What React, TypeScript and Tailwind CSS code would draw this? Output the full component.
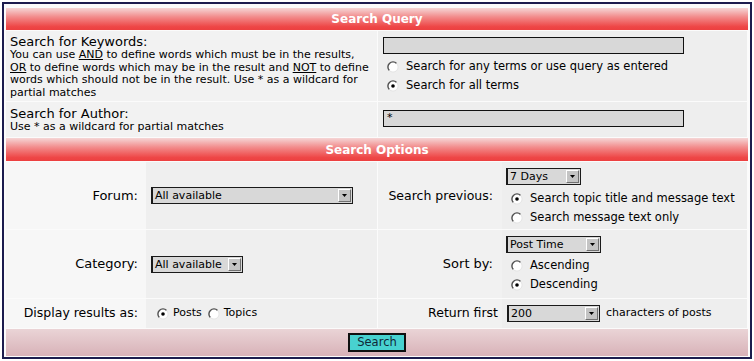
import React from 'react';

const Radio = ({ checked }: { checked?: boolean }) => (
  <svg width="12" height="12" viewBox="0 0 12 12" className="shrink-0">
    <circle cx="6" cy="6" r="5" fill="#ffffff" />
    <path d="M2.4 9.6 A5 5 0 0 1 9.6 2.4" stroke="#505050" strokeWidth="1.4" fill="none" />
    <path d="M9.6 2.4 A5 5 0 0 1 2.4 9.6" stroke="#e4e4e4" strokeWidth="1" fill="none" />
    {checked && <circle cx="6" cy="6" r="1.8" fill="#000000" />}
  </svg>
);

const Select = ({ value, className }: { value: string; className: string }) => (
  <div
    className={`flex h-[17px] items-center border border-[#1a1a1a] border-l-2 bg-[#d8d8d8] ${className}`}
  >
    <span className="flex-1 whitespace-nowrap pl-[2px] text-[11px] leading-none">{value}</span>
    <span className="mr-[1px] flex h-[13px] w-[13px] items-center justify-center border border-t-white border-l-white border-r-[#707070] border-b-[#707070] bg-[#c4c4c4]">
      <svg width="5" height="3" viewBox="0 0 5 3">
        <path d="M0 0 H5 L2.5 3 Z" fill="#000" />
      </svg>
    </span>
  </div>
);

const RadioRow = ({ checked, label }: { checked?: boolean; label: string }) => (
  <div className="flex h-[19px] items-center gap-[7px]">
    <Radio checked={checked} />
    <span className="whitespace-nowrap text-[11.5px]">{label}</span>
  </div>
);

const Header = ({ title, h }: { title: string; h: string }) => (
  <div
    className={`flex items-center justify-center bg-[linear-gradient(#f5d6d6,#f28c8c_40%,#ee4646_85%,#ec4040)] text-[12px] font-bold text-white ${h}`}
  >
    {title}
  </div>
);

export default function App() {
  return (
    <div className="bg-white" style={{ width: 754, height: 361 }}>
      <div
        className="ml-[2px] mt-[2px] w-[750px] border-2 border-[#1c1c4e] bg-[#fbfbfb] px-[2px] pb-[1px] pt-[4px] text-black"
        style={{ fontFamily: '"DejaVu Sans", Verdana, sans-serif' }}
      >
        <div className="flex flex-col gap-y-px">
          <Header title="Search Query" h="h-[22px]" />

          {/* keywords */}
          <div className="grid h-[70px] grid-cols-[371px_369px] gap-x-px">
            <div className="bg-[#f2f2f2] pl-[4px] pt-[3px]">
              <div className="text-[13px] leading-[15px]">Search for Keywords:</div>
              <div className="whitespace-nowrap text-[11px] leading-[12.5px]">
                You can use <u>AND</u> to define words which must be in the results,
                <br />
                <u>OR</u> to define words which may be in the result and <u>NOT</u> to define
                <br />
                words which should not be in the result. Use * as a wildcard for
                <br />
                partial matches
              </div>
            </div>
            <div className="bg-[#eeeeee] pl-[5px] pt-[6px]">
              <div className="h-[17px] w-[301px] border border-[#111] bg-[#d8d8d8]" />
              <div className="mt-[3px] pl-[4px]">
                <RadioRow label="Search for any terms or use query as entered" />
                <RadioRow checked label="Search for all terms" />
              </div>
            </div>
          </div>

          {/* author */}
          <div className="grid h-[35px] grid-cols-[371px_369px] gap-x-px">
            <div className="bg-[#f2f2f2] pl-[4px] pt-[4px]">
              <div className="text-[13px] leading-[15px]">Search for Author:</div>
              <div className="text-[11px] leading-[12px]">Use * as a wildcard for partial matches</div>
            </div>
            <div className="bg-[#eeeeee] pl-[5px] pt-[8px]">
              <div className="flex h-[17px] w-[301px] items-center border border-[#111] bg-[#d8d8d8] pl-[3px] text-[11px]">
                *
              </div>
            </div>
          </div>

          <Header title="Search Options" h="h-[23px]" />

          {/* forum / search previous */}
          <div className="grid h-[67px] grid-cols-[140px_231px_1px_124px_245px]">
            <div className="flex items-center justify-end bg-[#f7f7f7] pr-[8px] text-[13px]">Forum:</div>
            <div className="flex items-center bg-[#efefef] pl-[5px]">
              <Select value="All available" className="w-[202px]" />
            </div>
            <div />
            <div className="flex items-center justify-end bg-[#f1f1f1] pr-[9px] pt-[2px] text-[12.5px]">
              Search previous:
            </div>
            <div className="bg-[#eeeeee] pl-[4px] pt-[6px]">
              <Select value="7 Days" className="w-[75px]" />
              <div className="mt-[4px] pl-[5px]">
                <RadioRow checked label="Search topic title and message text" />
                <RadioRow label="Search message text only" />
              </div>
            </div>
          </div>

          {/* category / sort by */}
          <div className="grid h-[68px] grid-cols-[140px_231px_1px_124px_245px]">
            <div className="flex items-center justify-end bg-[#f7f7f7] pr-[8px] text-[13px]">Category:</div>
            <div className="flex items-center bg-[#efefef] pl-[5px]">
              <Select value="All available" className="w-[92px]" />
            </div>
            <div />
            <div className="flex items-center justify-end bg-[#f1f1f1] pr-[9px] text-[13px]">Sort by:</div>
            <div className="bg-[#eeeeee] pl-[4px] pt-[6px]">
              <Select value="Post Time" className="w-[95px]" />
              <div className="mt-[3px] pl-[5px]">
                <RadioRow label="Ascending" />
                <RadioRow checked label="Descending" />
              </div>
            </div>
          </div>

          {/* display / return first */}
          <div className="grid h-[29px] grid-cols-[140px_231px_1px_124px_245px]">
            <div className="flex items-center justify-end bg-[#f7f7f7] pr-[8px] text-[12.5px]">
              Display results as:
            </div>
            <div className="flex items-center bg-[#efefef] pl-[11px] text-[11px]">
              <Radio checked />
              <span className="ml-[4px]">Posts</span>
              <span className="ml-[6px]">
                <Radio />
              </span>
              <span className="ml-[4px]">Topics</span>
            </div>
            <div />
            <div className="flex items-center justify-end bg-[#f1f1f1] pr-[4px] text-[12.5px]">Return first</div>
            <div className="flex items-center gap-[6px] bg-[#eeeeee] pl-[5px]">
              <Select value="200" className="w-[93px]" />
              <span className="whitespace-nowrap text-[11px]">characters of posts</span>
            </div>
          </div>

          {/* footer */}
          <div className="flex h-[27px] items-center justify-center bg-[linear-gradient(#ead4d6,#d8b2b8)]">
            <button className="flex h-[19px] w-[58px] items-center justify-center border-2 border-[#101010] bg-[#48d2d0] text-[11.5px] text-[#102838]">
              Search
            </button>
          </div>
        </div>
      </div>
    </div>
  );
}
